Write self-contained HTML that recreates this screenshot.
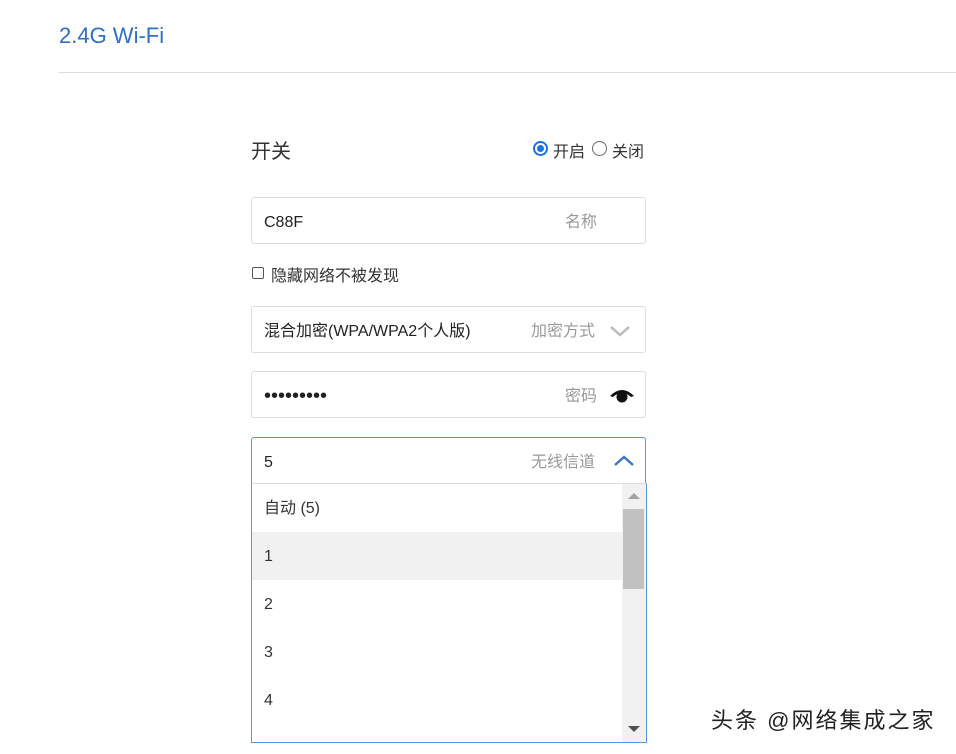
<!DOCTYPE html>
<html><head><meta charset="utf-8"><style>
*{box-sizing:border-box;margin:0;padding:0}
body{width:956px;height:754px;background:#fff;position:relative;overflow:hidden;font-family:"Liberation Sans","Noto Sans CJK SC",sans-serif;color:#333}
div{line-height:20px}
.a{position:absolute}
.box{position:absolute;left:251px;width:395px;height:47px;border:1px solid #ddd;border-radius:3px}
.ph{position:absolute;font-size:16px;color:#999}
.v{position:absolute;left:12px;font-size:16px;color:#222}
</style></head><body>
<div class="a" style="left:59px;top:25px;font-size:22px;line-height:22px;color:#2f6fc4">2.4G Wi-Fi</div>
<div class="a" style="left:59px;top:72px;width:897px;height:1px;background:#ddd"></div>
<div class="a" style="left:251px;top:141px;font-size:20px;line-height:22px;color:#333">开关</div>
<div class="a" style="left:533px;top:141px;width:15px;height:15px;border-radius:50%;border:2px solid #1a73e8;background:#fff"><div style="position:absolute;left:2px;top:2px;width:7px;height:7px;border-radius:50%;background:#1a73e8"></div></div>
<div class="a" style="left:553px;top:143px;font-size:16px">开启</div>
<div class="a" style="left:592px;top:141px;width:15px;height:15px;border-radius:50%;border:1px solid #666"></div>
<div class="a" style="left:612px;top:143px;font-size:16px">关闭</div>
<div class="box" style="top:197px"><div class="v" style="top:15px">C88F</div><div class="ph" style="left:313px;top:15px">名称</div></div>
<div class="a" style="left:252px;top:267px;width:12px;height:12px;border:1px solid #555;border-radius:2px"></div>
<div class="a" style="left:271px;top:267px;font-size:16px">隐藏网络不被发现</div>
<div class="box" style="top:306px"><div class="v" style="top:15px">混合加密(WPA/WPA2个人版)</div><div class="ph" style="left:279px;top:15px">加密方式</div>
<svg class="a" style="left:357px;top:17px" width="22" height="14"><path d="M2 3 L11 11 L20 3" stroke="#bbb" stroke-width="2.5" fill="none"/></svg></div>
<div class="box" style="top:371px"><div class="v" style="top:14px;font-size:20px">•••••••••</div><div class="ph" style="left:313px;top:15px">密码</div>
<svg class="a" style="left:357px;top:14px" width="26" height="18"><path d="M1 10 Q13 -2 25 10 L22 11 Q13 3 4 11 Z" fill="#111"/><circle cx="13" cy="11" r="5.5" fill="#111"/></svg></div>
<div class="box" style="top:437px;border-color:#5a95e0;border-radius:3px 3px 0 0"><div class="v" style="top:15px">5</div><div class="ph" style="left:279px;top:15px">无线信道</div>
<svg class="a" style="left:361px;top:16px" width="22" height="14"><path d="M2 11 L11 3 L20 11" stroke="#3d78c6" stroke-width="2.5" fill="none"/></svg></div>
<div class="a" style="left:251px;top:483px;width:396px;height:260px;border:1px solid #5a95e0;border-top:1px solid #ddd;background:#fff;overflow:hidden">
<div class="a" style="left:0;top:48px;width:370px;height:48px;background:#f1f1f1"></div>
<div class="a" style="left:12px;top:15px;font-size:16px">自动 (5)</div>
<div class="a" style="left:12px;top:63px;font-size:16px">1</div>
<div class="a" style="left:12px;top:111px;font-size:16px">2</div>
<div class="a" style="left:12px;top:159px;font-size:16px">3</div>
<div class="a" style="left:12px;top:207px;font-size:16px">4</div>
<div class="a" style="left:370px;top:0;width:24px;height:260px;background:#f1f1f1"></div>
<div class="a" style="left:371px;top:25px;width:21px;height:80px;background:#c1c1c1"></div>
<div class="a" style="left:376px;top:9px;width:0;height:0;border-left:6px solid transparent;border-right:6px solid transparent;border-bottom:6px solid #a3a3a3"></div>
<div class="a" style="left:376px;top:242px;width:0;height:0;border-left:6px solid transparent;border-right:6px solid transparent;border-top:6px solid #505050"></div>
</div>
<div class="a" style="left:711px;top:709px;font-size:22px;line-height:24px;letter-spacing:2px;color:#222;text-shadow:1px 1px 1px #fff,-1px -1px 1px #fff">头条 @网络集成之家</div>
</body></html>
